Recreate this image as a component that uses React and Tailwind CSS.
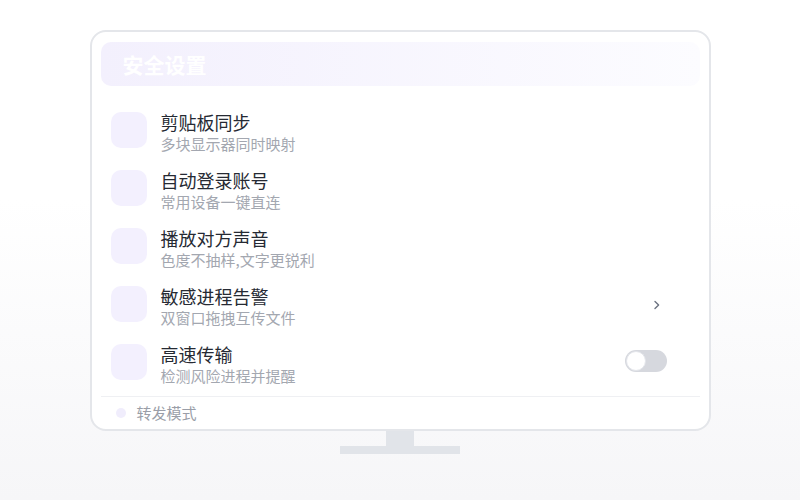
import React from 'react';

const rows = [
  { title: '剪贴板同步', sub: '多块显示器同时映射' },
  { title: '自动登录账号', sub: '常用设备一键直连' },
  { title: '播放对方声音', sub: '色度不抽样,文字更锐利' },
  { title: '敏感进程告警', sub: '双窗口拖拽互传文件', right: 'chevron' },
  { title: '高速传输', sub: '检测风险进程并提醒', right: 'toggle' },
];

const Chevron = () => (
  <svg width="8" height="10" viewBox="0 0 8 10" className="mt-[14px] mr-[6px]">
    <path d="M2 1.6 L5.6 5 L2 8.4" fill="none" stroke="#6b7280" strokeWidth="1.4" strokeLinecap="round" strokeLinejoin="round" />
  </svg>
);

const Toggle = () => (
  <div className="mt-[6px] w-[42px] h-[22px] rounded-full bg-[#d6d8de] relative">
    <div className="absolute left-[1px] top-[1px] w-[20px] h-[20px] rounded-full bg-white border border-[#e3e5ea]" />
  </div>
);

const App = () => {
  return (
    <div
      className="w-[800px] h-[500px] bg-linear-to-b from-white from-40% to-[#f6f6f8] flex flex-col items-center pt-[30px]"
      style={{ fontFamily: '"Noto Sans CJK SC", "Noto Sans", sans-serif' }}
    >
      {/* monitor */}
      <div className="w-[621px] h-[401px] bg-white border-2 border-[#e4e6ea] rounded-2xl px-[9px] pt-[10px] flex flex-col">
        <div className="h-[44px] rounded-[10px] bg-linear-to-r from-[#f3f0fd] to-[#fcfcff] flex items-center pl-[22px]">
          <span className="text-[21px] font-bold text-white leading-none">安全设置</span>
        </div>

        <div className="mt-[15px]">
          {rows.map((row) => (
            <div key={row.title} className="h-[58px] flex items-start pt-[11px] pl-[10px] pr-[33px]">
              <div className="w-9 h-9 rounded-[10px] bg-[#f3f0fe] shrink-0" />
              <div className="ml-[14px] flex flex-col">
                <span className="text-[18px] leading-[21px] text-[#262a33]">{row.title}</span>
                <span className="text-[15px] leading-[21px] text-[#a3a7b0]">{row.sub}</span>
              </div>
              <div className="ml-auto w-[42px] flex justify-end">
                {row.right === 'chevron' && <Chevron />}
                {row.right === 'toggle' && <Toggle />}
              </div>
            </div>
          ))}
        </div>

        <div className="mt-[5px] h-px bg-[#eff0f3]" />
        <div className="h-[32px] flex items-center pl-[15px]">
          <div className="w-[10px] h-[10px] rounded-full bg-[#f0edfc]" />
          <span className="ml-[11px] text-[15px] text-[#9a9ea8]">转发模式</span>
        </div>
      </div>

      {/* stand */}
      <div className="w-[28px] h-[15px] bg-[#e1e4e9]" />
      <div className="w-[120px] h-[8px] bg-[#e1e4e9]" />
    </div>
  );
};

export default App;
